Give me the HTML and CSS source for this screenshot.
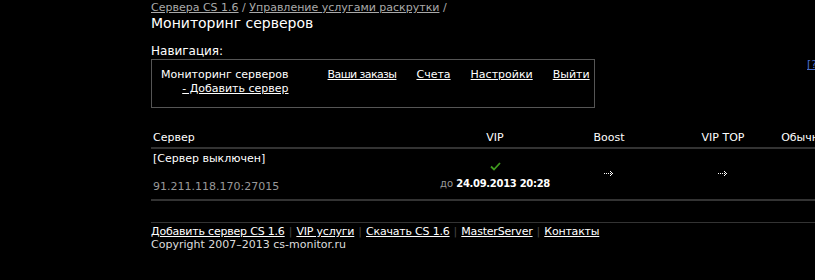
FILE: index.html
```html
<!DOCTYPE html>
<html lang="ru">
<head>
<meta charset="utf-8">
<title>Мониторинг серверов</title>
<link rel="stylesheet" href="styles.css">
</head>
<body>
<div class="page">
  <div class="crumbs"><a href="#">Сервера CS 1.6</a> / <a href="#">Управление услугами раскрутки</a> /</div>
  <h1 class="title">Мониторинг серверов</h1>
  <div class="nav-label">Навигация:</div>
  <div class="nav-box">
    <div class="nav-first">
      <span>Мониторинг серверов</span>
      <a href="#">- Добавить сервер</a>
    </div>
    <a class="nav-link narrow" href="#">Ваши заказы</a>
    <a class="nav-link" href="#">Счета</a>
    <a class="nav-link" href="#">Настройки</a>
    <a class="nav-link" href="#">Выйти</a>
  </div>
  <div class="table">
    <div class="thead">
      <div class="c-server">Сервер</div>
      <div class="c-opt">VIP</div>
      <div class="c-opt">Boost</div>
      <div class="c-opt">VIP TOP</div>
      <div class="c-last">Обычный</div>
    </div>
    <div class="trow">
      <div class="c-server">
        <div class="srv-name">[Сервер выключен]</div>
        <div class="srv-ip">91.211.118.170:27015</div>
      </div>
      <div class="c-opt vip">
        <svg class="check" width="11" height="9" viewBox="0 0 11 9"><path d="M1 4.5 L4 7.5 L10 1" fill="none" stroke="#3f9a1e" stroke-width="1.8"/></svg>
        <div class="until"><span class="do">до</span> <b>24.09.2013 20:28</b></div>
      </div>
      <div class="c-opt"><svg class="arrow" width="10" height="7" viewBox="0 0 10 7"><path d="M0 3h1M2 3h1M4 3h1M6 3h1M6 1h1M7 2h1M8 3h1M7 4h1M6 5h1" stroke="#fff" stroke-width="1" fill="none" transform="translate(0,0.5)"/></svg></div>
      <div class="c-opt"><svg class="arrow" width="10" height="7" viewBox="0 0 10 7"><path d="M0 3h1M2 3h1M4 3h1M6 3h1M6 1h1M7 2h1M8 3h1M7 4h1M6 5h1" stroke="#fff" stroke-width="1" fill="none" transform="translate(0,0.5)"/></svg></div>
      <div class="c-last"></div>
    </div>
  </div>
  <div class="footer">
    <div class="links">
      <a href="#">Добавить сервер CS 1.6</a><span class="sep">|</span><a href="#">VIP услуги</a><span class="sep">|</span><a href="#">Скачать CS 1.6</a><span class="sep">|</span><a href="#">MasterServer</a><span class="sep">|</span><a href="#">Контакты</a>
    </div>
    <div class="copy">Copyright 2007–2013 cs-monitor.ru</div>
  </div>
</div>
<a class="side-tab" href="#">[?]</a>
</body>
</html>
```

FILE: styles.css
```css
html, body {
  margin: 0;
  padding: 0;
  background: #000;
  color: #fff;
  font-family: "DejaVu Sans", Verdana, sans-serif;
  font-size: 11px;
  overflow: hidden;
  white-space: nowrap;
}
a { color: #fff; }
.page {
  padding-left: 151px;
  width: 900px;
}
.crumbs {
  color: #aaa;
  line-height: 14px;
  padding-top: 1px;
}
.crumbs a { color: #aaa; }
.title {
  margin: 0;
  font-size: 14px;
  font-weight: normal;
  line-height: 16px;
}
.nav-label {
  margin-top: 13px;
  font-size: 12px;
  line-height: 14px;
}
.nav-box {
  width: 444px;
  height: 49px;
  margin-top: 1px;
  border: 1px solid #555;
  display: flex;
  align-items: flex-start;
  padding-top: 8px;
  box-sizing: border-box;
  line-height: 14px;
}
.nav-first {
  display: flex;
  flex-direction: column;
  align-items: flex-end;
  margin-left: 9px;
  margin-right: 39px;
}
.nav-link { margin-right: 20px; }
.narrow { letter-spacing: -0.6px; }
.table {
  margin-top: 22px;
  width: 900px;
}
.thead, .trow {
  display: flex;
  border-bottom: 2px solid #333;
}
.thead { height: 17px; line-height: 16px; }
.trow { height: 50px; }
.c-server { width: 285px; padding-left: 2px; }
.c-opt { width: 114px; text-align: center; }
.c-last { width: 56px; text-align: center; }
.srv-name { margin-top: 3px; line-height: 14px; }
.srv-ip { color: #999; margin-top: 14px; line-height: 14px; }
.vip { display: flex; flex-direction: column; align-items: center; }
.check { margin-top: 13px; }
.until { margin-top: 6px; line-height: 13px; font-size: 10px; }
.until b { letter-spacing: -0.3px; }
.do { color: #999; }
.arrow { margin-top: 21px; }
.footer {
  margin-top: 21px;
  border-top: 1px solid #333;
  padding-top: 2px;
  width: 700px;
  line-height: 13px;
}
.sep { color: #444; margin: 0 4px; }
.links a { letter-spacing: -0.2px; }
.copy { color: #ddd; }
.side-tab {
  position: absolute;
  left: 807px;
  top: 58px;
  color: #4a6fd0;
  font-size: 11px;
}
```
